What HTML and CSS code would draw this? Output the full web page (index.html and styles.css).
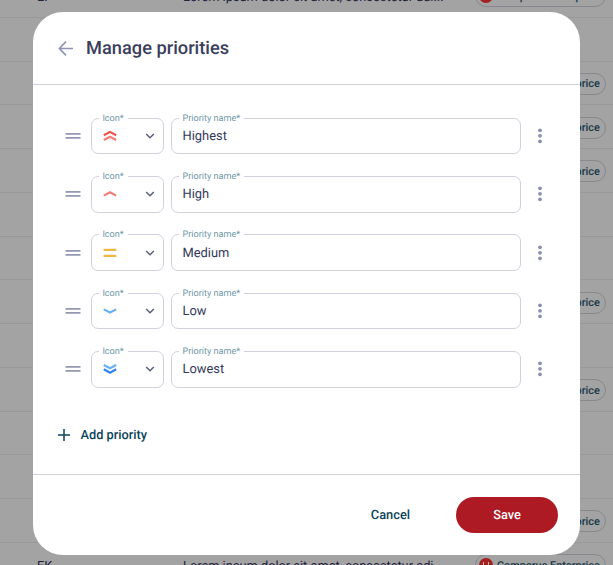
FILE: index.html
```html
<!DOCTYPE html>
<html lang="en">

<head>
    <meta charset="UTF-8">
    <meta name="viewport" content="width=device-width, initial-scale=1.0">
    <title>Manage priorities</title>
    <link rel="stylesheet" href="styles.css">
</head>

<body>
    <!-- icons -->
    <svg class="sprite" xmlns="http://www.w3.org/2000/svg">
        <symbol id="drag" viewBox="0 0 16 8"><path d="M0.5 1.8h15M0.5 5.8h15" stroke="#9498b2" stroke-width="1.8" /></symbol>
        <symbol id="chevron" viewBox="0 0 10 6"><path d="M1.2 1l3.8 3.8L8.8 1" stroke="#5b5f80" stroke-width="1.5" /></symbol>
        <symbol id="dots" viewBox="0 0 4 16"><g fill="#8b8fae"><circle cx="2" cy="2.3" r="1.9" /><circle cx="2" cy="7.8" r="1.9" /><circle cx="2" cy="13.3" r="1.9" /></g></symbol>
        <symbol id="highest" viewBox="0 0 14 14"><path d="M0.8 6.2L7 2.9l6.2 3.3" stroke="#f0524b" stroke-width="2.2" /><path d="M0.8 11L7 7.7l6.2 3.3" stroke="#f57c76" stroke-width="2.2" /></symbol>
        <symbol id="high" viewBox="0 0 14 14"><path d="M0.8 8.6L7 5.3l6.2 3.3" stroke="#f57c76" stroke-width="2.1" /></symbol>
        <symbol id="medium" viewBox="0 0 14 14"><path d="M0.6 3.8h12.8M0.6 9.9h12.8" stroke="#edbb45" stroke-width="2.2" /></symbol>
        <symbol id="low" viewBox="0 0 14 14"><path d="M0.8 5.4L7 8.5l6.2-3.1" stroke="#68aef8" stroke-width="2.1" /></symbol>
        <symbol id="lowest" viewBox="0 0 14 14"><path d="M0.8 3L7 6.3 13.2 3" stroke="#68aef8" stroke-width="2.2" /><path d="M0.8 7.3L7 10.8l6.2-3.5" stroke="#2f86f3" stroke-width="2.2" /></symbol>
    </svg>

    <div class="page">
        <div class="row"><span class="code">EI</span><span class="text">Lorem ipsum dolor sit amet, consectetur adi...</span><span class="pill"><i class="logo"></i>Comparus Enterprice</span></div>
        <div class="row"></div>
        <div class="row"><span class="pill"><i class="logo"></i>Comparus Enterprice</span></div>
        <div class="row"><span class="pill"><i class="logo"></i>Comparus Enterprice</span></div>
        <div class="row"><span class="pill"><i class="logo"></i>Comparus Enterprice</span></div>
        <div class="row"></div>
        <div class="row"></div>
        <div class="row"><span class="pill"><i class="logo"></i>Comparus Enterprice</span></div>
        <div class="row"></div>
        <div class="row"><span class="pill"><i class="logo"></i>Comparus Enterprice</span></div>
        <div class="row"></div>
        <div class="row"></div>
        <div class="row"><span class="pill"><i class="logo"></i>Comparus Enterprice</span></div>
        <div class="row"><span class="code">EK</span><span class="text">Lorem ipsum dolor sit amet, consectetur adi...</span><span class="pill"><i class="logo"></i>Comparus Enterprice</span></div>
    </div>

    <div class="modal">
        <div class="header">
            <svg class="back" viewBox="0 0 16 16"><path d="M15 8.5H2M8 1.7L1.4 8.5 8 15.3" stroke="#9094b0" stroke-width="1.7" /></svg>
            <h1>Manage priorities</h1>
        </div>

        <div class="content">
            <div class="priority">
                <svg class="drag"><use href="#drag" /></svg>
                <div class="field select"><label>Icon*</label><svg class="level"><use href="#highest" /></svg><svg class="chevron"><use href="#chevron" /></svg></div>
                <div class="field name"><label>Priority name*</label>Highest</div>
                <svg class="dots"><use href="#dots" /></svg>
            </div>
            <div class="priority">
                <svg class="drag"><use href="#drag" /></svg>
                <div class="field select"><label>Icon*</label><svg class="level"><use href="#high" /></svg><svg class="chevron"><use href="#chevron" /></svg></div>
                <div class="field name"><label>Priority name*</label>High</div>
                <svg class="dots"><use href="#dots" /></svg>
            </div>
            <div class="priority">
                <svg class="drag"><use href="#drag" /></svg>
                <div class="field select"><label>Icon*</label><svg class="level"><use href="#medium" /></svg><svg class="chevron"><use href="#chevron" /></svg></div>
                <div class="field name"><label>Priority name*</label>Medium</div>
                <svg class="dots"><use href="#dots" /></svg>
            </div>
            <div class="priority">
                <svg class="drag"><use href="#drag" /></svg>
                <div class="field select"><label>Icon*</label><svg class="level"><use href="#low" /></svg><svg class="chevron"><use href="#chevron" /></svg></div>
                <div class="field name"><label>Priority name*</label>Low</div>
                <svg class="dots"><use href="#dots" /></svg>
            </div>
            <div class="priority">
                <svg class="drag"><use href="#drag" /></svg>
                <div class="field select"><label>Icon*</label><svg class="level"><use href="#lowest" /></svg><svg class="chevron"><use href="#chevron" /></svg></div>
                <div class="field name"><label>Priority name*</label>Lowest</div>
                <svg class="dots"><use href="#dots" /></svg>
            </div>

            <button class="add">
                <svg class="plus" viewBox="0 0 12 12"><path d="M6 0v12M0 6h12" stroke="#0c4459" stroke-width="1.5" /></svg>
                <span>Add priority</span>
            </button>
        </div>

        <div class="footer">
            <button class="cancel">Cancel</button>
            <button class="save">Save</button>
        </div>
    </div>
</body>

</html>
```
FILE: styles.css
```css
* {
    margin: 0;
    padding: 0;
    box-sizing: border-box;
}

body {
    position: relative;
    width: 613px;
    height: 565px;
    overflow: hidden;
    background-color: #a3a3a3;
    font-family: Roboto, sans-serif;
    text-rendering: geometricPrecision;
    color: #34385a;
}

svg {
    fill: none;
    flex-shrink: 0;
}

.sprite {
    display: none;
}

button {
    border: none;
    background: none;
    font-family: inherit;
    font-size: 12.8px;
    font-weight: 500;
    text-rendering: inherit;
    color: #0c4459;
}

/* table behind the modal */
.page {
    margin-top: -26px;
}

.row {
    display: flex;
    align-items: center;
    height: 43.75px;
    padding: 2px 7px 0 37px;
    border-bottom: 1px solid #999;
    font-size: 12.8px;
    color: #24243d;
    white-space: nowrap;
}

.code,
.text {
    padding-top: 2px;
}

.code {
    width: 146px;
}

.pill {
    display: flex;
    align-items: center;
    gap: 4px;
    width: 131px;
    height: 22px;
    margin-left: auto;
    padding-left: 3px;
    border: 1px solid #88888e;
    border-radius: 11px;
    font-size: 10.9px;
    font-weight: 500;
    color: #163746;
}

.logo {
    display: flex;
    align-items: center;
    justify-content: center;
    width: 14px;
    height: 14px;
    border-radius: 50%;
    background-color: #a3211f;
}

.logo::before {
    content: "";
    width: 4px;
    height: 7px;
    border-left: 1.5px solid #c9b0b0;
    border-right: 1.5px solid #c9b0b0;
}

/* modal */
.modal {
    position: absolute;
    left: 33px;
    top: 12px;
    display: flex;
    flex-direction: column;
    width: 547px;
    height: 543px;
    border-radius: 30px;
    background-color: #fff;
}

.header {
    display: flex;
    align-items: center;
    gap: 12px;
    height: 73px;
    padding-left: 25px;
    border-bottom: 1px solid #cfd0dc;
}

.back {
    width: 16px;
    height: 16px;
}

h1 {
    padding-top: 1px;
    font-size: 18.25px;
    font-weight: 500;
    color: #3a3e5c;
}

.content {
    flex: 1;
    padding: 33px 25px 0 32px;
}

.priority {
    display: flex;
    align-items: center;
    height: 36px;
    margin-bottom: 22.35px;
}

.drag {
    width: 16px;
    height: 8px;
    margin-right: 10.4px;
}

.field {
    position: relative;
    display: flex;
    align-items: center;
    height: 36.5px;
    border: 1px solid #d0d1de;
    border-radius: 7px;
    font-size: 12.9px;
}

.field label {
    position: absolute;
    left: 7px;
    top: -6px;
    padding: 0 4px 0 3px;
    background-color: #fff;
    font-size: 9.1px;
    line-height: 12px;
    color: #7199a8;
}

.select {
    justify-content: space-between;
    width: 72.6px;
    margin-right: 7.5px;
    padding: 0 8px 0 11px;
}

.name {
    width: 350px;
    padding: 1px 0 0 10px;
}

.level {
    width: 14px;
    height: 14px;
}

.chevron {
    width: 10px;
    height: 6px;
}

.dots {
    width: 4px;
    height: 16px;
    margin-left: 16.5px;
}

.add {
    display: flex;
    align-items: center;
    gap: 10.5px;
    margin: 39px 0 0 -7px;
}

.add span {
    padding-top: 2px;
}

.plus {
    width: 12px;
    height: 12px;
}

.footer {
    display: flex;
    align-items: center;
    justify-content: flex-end;
    height: 81px;
    padding-right: 22px;
    border-top: 1px solid #cfd0dc;
}

.cancel {
    margin-right: 46px;
    padding-top: 1px;
}

.save {
    width: 102px;
    height: 36px;
    padding-top: 1px;
    border-radius: 18px;
    background-color: #ae1a23;
    color: #fff;
}
```
